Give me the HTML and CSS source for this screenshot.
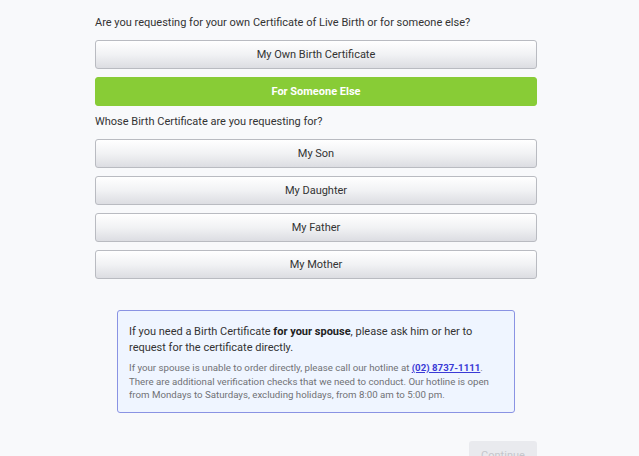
FILE: index.html
```html
<!DOCTYPE html>
<html lang="en">
<head>
<meta charset="utf-8">
<title>Birth Certificate Request</title>
<link rel="stylesheet" href="styles.css">
</head>
<body>
<main class="page">
  <p class="question">Are you requesting for your own Certificate of Live Birth or for someone else?</p>
  <div class="options">
    <button class="opt">My Own Birth Certificate</button>
    <button class="opt opt-active">For Someone Else</button>
  </div>
  <p class="question q2">Whose Birth Certificate are you requesting for?</p>
  <div class="options">
    <button class="opt">My Son</button>
    <button class="opt">My Daughter</button>
    <button class="opt">My Father</button>
    <button class="opt">My Mother</button>
  </div>
  <div class="notice">
    <p class="notice-main">If you need a Birth Certificate <strong>for your spouse</strong>, please ask him or her to request for the certificate directly.</p>
    <p class="notice-sub">If your spouse is unable to order directly, please call our hotline at <a href="#" class="hotline">(02) 8737-1111</a>. There are additional verification checks that we need to conduct. Our hotline is open from Mondays to Saturdays, excluding holidays, from 8:00 am to 5:00 pm.</p>
  </div>
  <div class="actions">
    <button class="continue" disabled>Continue</button>
  </div>
</main>
</body>
</html>
```

FILE: styles.css
```css
html, body {
  margin: 0;
  padding: 0;
}
body {
  background: #f8f9fb;
  font-family: Roboto, "Liberation Sans", Arial, sans-serif;
  color: #333;
  font-size: 11px;
}
.page {
  width: 442px;
  margin-left: 95px;
  padding-top: 15px;
  display: flex;
  flex-direction: column;
}
.question {
  margin: 0 0 9px 0;
  line-height: 16px;
  font-size: 11px;
  color: #333;
}
.q2 {
  margin-top: 8px;
}
.options {
  display: flex;
  flex-direction: column;
  gap: 8px;
}
.opt {
  height: 29px;
  width: 100%;
  border: 1px solid #b9bbc1;
  border-radius: 3px;
  background: linear-gradient(#ffffff, #f1f2f4 50%, #dcdde2);
  font-family: inherit;
  font-size: 11px;
  color: #333;
  padding: 0;
}
.opt-active {
  background: #88cc36;
  border-color: #88cc36;
  color: #fff;
  font-weight: 700;
}
.notice {
  align-self: center;
  width: 398px;
  box-sizing: border-box;
  margin-top: 31px;
  height: 103px;
  border: 1px solid #8a93e3;
  border-radius: 3px;
  background: #eff5ff;
  padding: 13px 11px 0 11px;
}
.notice-main {
  margin: 0;
  font-size: 11px;
  line-height: 16px;
  color: #333;
}
.notice-main strong {
  color: #222;
}
.notice-sub {
  margin: 5px 0 0 0;
  font-size: 9.7px;
  line-height: 13.7px;
  color: #6f7175;
}
.hotline {
  color: #3a3ad6;
  font-weight: 700;
  text-decoration: underline;
}
.actions {
  display: flex;
  justify-content: flex-end;
  margin-top: 28px;
}
.continue {
  width: 68px;
  height: 29px;
  border: none;
  border-radius: 3px;
  background: #e9eaee;
  color: #c4c6cb;
  font-family: inherit;
  font-size: 11px;
  padding: 0;
}
```
